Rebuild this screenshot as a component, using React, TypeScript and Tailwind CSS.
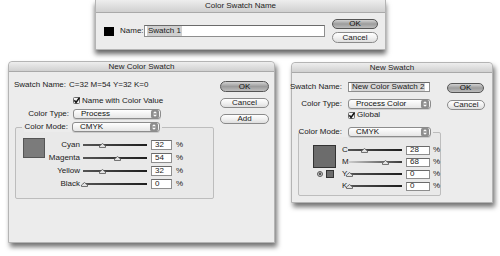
import React from "react";

function TitleBar({ text, tall }: { text: string; tall?: boolean }) {
  return (
    <div
      className={`flex shrink-0 items-center justify-center rounded-t-[4px] border-b border-[#a9a9a9] bg-linear-to-b from-[#eeeeee] to-[#d0d0d0] text-[8px] text-[#222] ${tall ? "h-[13px]" : "h-[10px]"}`}
    >
      {text}
    </div>
  );
}

function AquaButton({ label, def, className }: { label: string; def?: boolean; className: string }) {
  return (
    <div
      className={`flex items-center justify-center rounded-full border text-[8px] leading-none ${
        def
          ? "border-[#555] bg-linear-to-b from-[#d2d2d2] via-[#9c9c9c] to-[#bdbdbd] text-[#111]"
          : "border-[#8a8a8a] bg-linear-to-b from-white via-[#f1f1f1] to-[#dedede] text-[#222]"
      } ${className}`}
    >
      {label}
    </div>
  );
}

function Arrows() {
  return (
    <svg width="8" height="8" viewBox="0 0 8 8">
      <rect x="0" y="0" width="8" height="8" rx="1.5" fill="#8e8e8e" />
      <path d="M2 3.3 L4 1.2 L6 3.3 Z" fill="#fff" />
      <path d="M2 4.7 L4 6.8 L6 4.7 Z" fill="#fff" />
    </svg>
  );
}

function Dropdown({ text, className }: { text: string; className: string }) {
  return (
    <div
      className={`flex h-[10px] items-center rounded-[3px] border border-[#8c8c8c] bg-linear-to-b from-white to-[#e6e6e6] pl-[7px] text-[8px] leading-none text-[#111] shadow-[0_1px_0_rgba(0,0,0,0.12)] ${className}`}
    >
      <span className="flex-1 whitespace-nowrap">{text}</span>
      <span className="mr-[1px] flex">
        <Arrows />
      </span>
    </div>
  );
}

function CheckBox() {
  return (
    <svg width="7" height="7" viewBox="0 0 7 7" className="shrink-0">
      <rect x="0.5" y="0.5" width="6" height="6" rx="1" fill="#f4f4f4" stroke="#6a6a6a" />
      <path d="M1.4 3.3 L3 5.4 L6.6 0.4" fill="none" stroke="#111" strokeWidth="1.5" />
    </svg>
  );
}

function Slider({ pct, className, fade }: { pct: number; className: string; fade?: boolean }) {
  return (
    <div className={`relative h-[2px] ${className}`}>
      <div
        className={`h-[2px] w-full ${
          fade ? "bg-linear-to-r from-[#cfcfcf] to-[#3a3a3a]" : "bg-linear-to-r from-[#555] to-[#1e1e1e]"
        }`}
      />
      <svg
        width="7"
        height="5"
        viewBox="0 0 7 5"
        className="absolute top-[-1px]"
        style={{ left: `calc(${pct}% - 3px)` }}
      >
        <path d="M3.5 0.5 L6.5 3 L6.5 4.5 L0.5 4.5 L0.5 3 Z" fill="#e2e2e2" stroke="#555" strokeWidth="0.8" />
      </svg>
    </div>
  );
}

function NumBox({ v, className }: { v: string; className: string }) {
  return (
    <div
      className={`flex items-center border border-[#8e8e8e] border-t-[#6a6a6a] bg-white pl-[3px] text-[8px] leading-none text-[#222] ${className}`}
    >
      {v}
    </div>
  );
}

export default function App() {
  const leftRows = [
    { l: "Cyan", v: "32", p: 30 },
    { l: "Magenta", v: "54", p: 53 },
    { l: "Yellow", v: "32", p: 30 },
    { l: "Black", v: "0", p: 1 },
  ];
  const rightRows = [
    { l: "C", v: "28", p: 30, fade: false },
    { l: "M", v: "68", p: 68, fade: true },
    { l: "Y", v: "0", p: 2, fade: false },
    { l: "K", v: "0", p: 2, fade: false },
  ];
  return (
    <div className="relative h-[256px] w-[500px] overflow-hidden bg-white font-['Liberation_Sans',Arial,sans-serif] text-[#1a1a1a]">
      {/* Color Swatch Name */}
      <div className="absolute left-[95px] top-0 flex h-[50px] w-[291px] flex-col border border-t-0 border-[#b4b4b4] bg-[#ececec] shadow-[0_4px_5px_rgba(0,0,0,0.6)]">
        <TitleBar text="Color Swatch Name" tall />
        <div className="flex pt-[6px]">
          <div className="flex h-[24px] items-center">
            <div className="ml-[8px] h-[9px] w-[10px] bg-black" />
            <div className="ml-[6px] w-[22px] text-[8px] leading-none">Name:</div>
            <div className="ml-[2px] flex h-[12px] w-[181px] items-center border border-[#8e8e8e] border-t-[#6a6a6a] bg-white pl-[2px] text-[8px] leading-none">
              <span className="bg-[#cfcfcf] px-[1px] py-[1px]">Swatch 1</span>
            </div>
          </div>
          <div className="ml-[7px] flex w-[46px] flex-col">
            <AquaButton label="OK" def className="h-[10px] w-[46px]" />
            <AquaButton label="Cancel" className="mt-[3px] h-[11px] w-[46px]" />
          </div>
        </div>
      </div>

      {/* New Color Swatch */}
      <div className="absolute left-[8px] top-[61px] flex h-[182px] w-[267px] flex-col rounded-t-[4px] border border-[#b4b4b4] bg-[#ececec] shadow-[2px_4px_5px_rgba(0,0,0,0.55)]">
        <TitleBar text="New Color Swatch" />
        <div className="flex pt-[8px] text-[8px] leading-none">
          <div className="flex w-[206px] flex-col pl-[6px]">
            <div className="flex h-[10px] items-center">
              <div className="flex w-[51px] justify-end whitespace-nowrap">Swatch Name:</div>
              <span className="ml-[3px] whitespace-nowrap">C=32 M=54 Y=32 K=0</span>
            </div>
            <div className="mt-[6px] flex h-[9px] items-center pl-[58px]">
              <CheckBox />
              <span className="ml-[2px] whitespace-nowrap">Name with Color Value</span>
            </div>
            <div className="mt-[4px] flex h-[10px] items-center">
              <div className="flex w-[54px] justify-end whitespace-nowrap">Color Type:</div>
              <Dropdown text="Process" className="ml-[4px] w-[88px]" />
            </div>
            <fieldset className="mt-[3px] w-[199px] rounded-[2px] border border-[#bdbdbd] bg-[#e9e9e9]">
              <legend className="ml-[6px] px-[2px]">
                <div className="flex h-[10px] items-center bg-[#ececec]">
                  <div className="flex w-[44px] justify-end whitespace-nowrap">Color Mode:</div>
                  <Dropdown text="CMYK" className="ml-[4px] w-[88px]" />
                </div>
              </legend>
              <div className="flex pb-[8px] pl-[7px] pt-[6px]">
                <div className="h-[20px] w-[22px] border border-[#555] bg-[#7b7b7b]" />
                <div className="flex flex-col">
                  {leftRows.map((r) => (
                    <div key={r.l} className="flex h-[13px] items-center">
                      <div className="flex w-[35px] justify-end whitespace-nowrap">{r.l}</div>
                      <Slider pct={r.p} className="ml-[3px] w-[64px]" />
                      <NumBox v={r.v} className="ml-[4px] h-[10px] w-[21px]" />
                      <span className="ml-[4px]">%</span>
                    </div>
                  ))}
                </div>
              </div>
            </fieldset>
          </div>
          <div className="ml-[5px] flex w-[49px] flex-col">
            <AquaButton label="OK" def className="mt-[1px] h-[11px] w-[49px]" />
            <AquaButton label="Cancel" className="mt-[6px] h-[10px] w-[49px]" />
            <AquaButton label="Add" className="mt-[6px] h-[10px] w-[49px]" />
          </div>
        </div>
      </div>

      {/* New Swatch */}
      <div className="absolute left-[291px] top-[62px] flex h-[141px] w-[202px] flex-col rounded-t-[4px] border border-[#b4b4b4] bg-[#ececec] shadow-[2px_4px_5px_rgba(0,0,0,0.55)]">
        <TitleBar text="New Swatch" />
        <div className="flex pt-[9px] text-[8px] leading-none">
          <div className="flex w-[148px] flex-col pl-[6px]">
            <div className="flex h-[10px] items-center">
              <div className="flex w-[44px] justify-end whitespace-nowrap">Swatch Name:</div>
              <div className="ml-[6px] flex h-[10px] w-[82px] items-center border border-[#8e8e8e] border-t-[#6a6a6a] bg-white pl-[2px]">
                <span className="whitespace-nowrap bg-[#d6d6d6] px-[1px]">New Color Swatch 2</span>
              </div>
            </div>
            <div className="mt-[7px] flex h-[10px] items-center">
              <div className="flex w-[44px] justify-end whitespace-nowrap">Color Type:</div>
              <Dropdown text="Process Color" className="ml-[6px] w-[83px]" />
            </div>
            <div className="mt-[2px] flex h-[8px] items-center pl-[50px]">
              <CheckBox />
              <span className="ml-[2px]">Global</span>
            </div>
            <fieldset className="mt-[8px] w-[142px] rounded-[2px] border border-[#bdbdbd] bg-[#e9e9e9]">
              <legend className="ml-[3px] px-[2px]">
                <div className="flex h-[10px] items-center bg-[#ececec]">
                  <div className="flex w-[38px] justify-end whitespace-nowrap">Color Mode:</div>
                  <Dropdown text="CMYK" className="ml-[6px] w-[83px]" />
                </div>
              </legend>
              <div className="flex pb-[3px] pl-[14px] pt-[7px]">
                <div className="mt-[1px] flex w-[23px] flex-col">
                  <div className="h-[23px] w-[23px] border border-[#333] bg-[#6c6c6c]" />
                  <div className="mt-[2px] flex items-center justify-end pr-[2px]">
                    <svg width="6" height="6" viewBox="0 0 6 6">
                      <circle cx="3" cy="3" r="2.5" fill="#ddd" stroke="#333" strokeWidth="0.8" />
                      <path d="M1.8 2 L3 1.3 L4.2 2 L4.2 3.8 L3 4.6 L1.8 3.8 Z" fill="#555" />
                    </svg>
                    <div className="ml-[3px] h-[8px] w-[8px] border border-[#333] bg-[#6c6c6c]" />
                  </div>
                </div>
                <div className="flex flex-col">
                  {rightRows.map((r) => (
                    <div key={r.l} className="flex h-[12px] items-center">
                      <div className="ml-[6px] w-[6px]">{r.l}</div>
                      <Slider pct={r.p} fade={r.fade} className="w-[54px]" />
                      <NumBox v={r.v} className="ml-[4px] h-[9px] w-[24px]" />
                      <span className="ml-[3px]">%</span>
                    </div>
                  ))}
                </div>
              </div>
            </fieldset>
          </div>
          <div className="ml-[7px] flex w-[38px] flex-col">
            <AquaButton label="OK" def className="mt-[1px] h-[10px] w-[37px]" />
            <AquaButton label="Cancel" className="mt-[7px] h-[10px] w-[38px]" />
          </div>
        </div>
      </div>
    </div>
  );
}
